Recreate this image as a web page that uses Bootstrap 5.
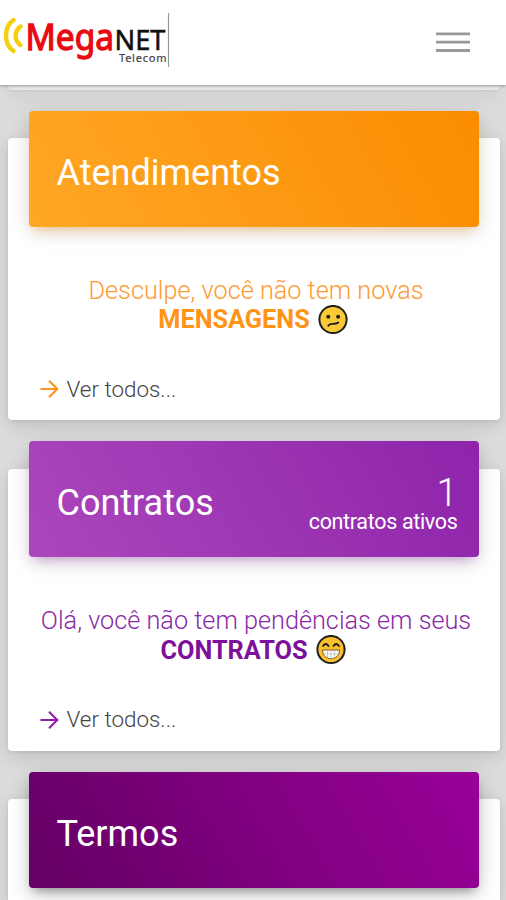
<!DOCTYPE html>
<html lang="pt-BR">
<head>
<meta charset="utf-8">
<meta name="viewport" content="width=device-width, initial-scale=1">
<title>MegaNET Telecom</title>
<link href="https://cdn.jsdelivr.net/npm/bootstrap@5.3.0/dist/css/bootstrap.min.css" rel="stylesheet">
<style>
  body { height: 900px; overflow: hidden; background: #dcdcdc; font-family: Roboto, sans-serif; }
  .topbar { height: 84.5px; padding: 0 36px 0 0; background: #fff; box-shadow: 0 1px 3px rgba(0,0,0,.32); z-index: 5; }
  .feed { height: 815.5px; padding: 0 6.5px 0 7.5px; }
  .panel { height: 282px; margin-bottom: 48.5px; border: 0; border-radius: 4px; background: #fff; box-shadow: 0 5px 18px rgba(0,0,0,.14), 0 1px 3px rgba(0,0,0,.08); }
  .panel-end { height: 5.5px; margin-bottom: 48px; border-radius: 0 0 4px 4px; background: #e8e8e8; }
  .plum.panel { height: 101px; margin-bottom: 0; border-radius: 4px 4px 0 0; }
  .banner { height: 116px; margin: -27.5px 21px 0; padding: 8px 21px 0 28px; border-radius: 4px; color: #fff; }
  .banner h2 { font-size: 36px; line-height: 42px; font-weight: 400; margin: 0; }
  .orange .banner { background: linear-gradient(60deg, #ffa726, #fb8c00); box-shadow: 0 5px 22px rgba(0,0,0,.13), 0 7px 12px -5px rgba(255,152,0,.4); }
  .purple .banner { background: linear-gradient(60deg, #ab47bc, #8e24aa); box-shadow: 0 5px 22px rgba(0,0,0,.13), 0 7px 12px -5px rgba(156,39,176,.4); }
  .plum .banner { background: linear-gradient(60deg, #640064, #990099); box-shadow: 0 5px 20px rgba(0,0,0,.22), 0 7px 10px -5px rgba(0,0,0,.35); }
  .tally { padding-top: 5px; }
  .tally b { font-size: 38px; line-height: 32px; font-weight: 300; }
  .tally span { font-size: 21.5px; line-height: 26px; letter-spacing: -.33px; }
  .notice { margin-top: 49px; font-size: 25.25px; line-height: 29px; font-weight: 300; white-space: nowrap; }
  .notice .lead-in { padding-left: 5px; }
  .notice strong { font-weight: 700; font-size: 25.3px; }
  .orange .notice { color: #ff9a30; }
  .orange .notice strong { color: #ff9416; }
  .purple .notice { color: #8a2aa6; }
  .purple .notice strong { color: #7c109a; }
  .orange .arrow { color: #ff9420; }
  .purple .arrow { color: #9520ac; }
  .more { margin-top: 41px; padding-left: 32px; font-size: 22.4px; line-height: 27px; font-weight: 300; color: #444; text-decoration: none; }
</style>
<script src="https://cdn.jsdelivr.net/npm/bootstrap@5.3.0/dist/js/bootstrap.bundle.min.js"></script>
</head>
<body>
<nav class="topbar position-relative d-flex align-items-center justify-content-between">
  <svg width="172" height="85" viewBox="0 0 172 85" role="img" aria-label="MegaNET Telecom">
    <g fill="none" stroke="#f6cf0c" stroke-width="4.400" stroke-linecap="round">
      <path d="M13.500 20C3.500 27 3.500 44 13.500 51"/>
      <path d="M20.500 26.500C14 31 14 40.500 20.500 45"/>
    </g>
    <g font-family="'Noto Sans', 'Open Sans', sans-serif">
      <text x="25.500" y="50" font-size="37" font-weight="400" fill="#e80c12" stroke="#e80c12" stroke-width="1.300" textLength="88.500" lengthAdjust="spacingAndGlyphs">Mega</text>
      <text x="114.500" y="50" font-size="27" font-weight="400" fill="#111" stroke="#111" stroke-width=".5" textLength="51" lengthAdjust="spacingAndGlyphs">NET</text>
      <text x="119" y="62" font-size="11" fill="#444" stroke="#444" stroke-width=".2" textLength="47.500">Telecom</text>
    </g>
    <path d="M168.500 13V67" stroke="#999" stroke-width="1.200"/>
  </svg>
  <svg width="34" height="22" viewBox="0 0 34 22" role="img" aria-label="Menu">
    <path d="M0 2.800H34M0 11.200H34M0 19.500H34" stroke="#999" stroke-width="2.800"/>
  </svg>
</nav>

<main class="feed">
  <div class="panel panel-end"></div>

  <section class="card panel orange">
    <div class="banner d-flex align-items-center"><h2>Atendimentos</h2></div>
    <div class="notice text-center">
      <div class="lead-in">Desculpe, você não tem novas</div>
      <div class="d-flex justify-content-center align-items-center">
        <strong>MENSAGENS</strong>
        <svg class="ms-2" width="31" height="30" viewBox="0 0 31 30" aria-hidden="true">
          <circle cx="15" cy="14.500" r="13.600" fill="#fcc936" stroke="#211f1f" stroke-width="2"/>
          <g fill="#211f1f"><circle cx="10.300" cy="11.800" r="2"/><circle cx="20.100" cy="11.800" r="2"/></g>
          <path d="M10.300 20.800C12.500 17 16.500 20.500 20.200 17.500" fill="none" stroke="#211f1f" stroke-width="1.900" stroke-linecap="round"/>
        </svg>
      </div>
    </div>
    <a class="more d-flex align-items-center" href="#">
      <svg class="arrow me-2" width="19" height="20" viewBox="0 0 19 20" fill="none" stroke="currentColor" stroke-width="2.200" aria-hidden="true"><path d="M.5 10H17M9 1.700L17.300 10L9 18.300"/></svg>
      Ver todos...
    </a>
  </section>

  <section class="card panel purple">
    <div class="banner d-flex align-items-center justify-content-between">
      <h2>Contratos</h2>
      <div class="tally d-flex flex-column align-items-end"><b>1</b><span>contratos ativos</span></div>
    </div>
    <div class="notice text-center">
      <div class="lead-in">Olá, você não tem pendências em seus</div>
      <div class="d-flex justify-content-center align-items-center">
        <strong>CONTRATOS</strong>
        <svg class="ms-2" width="31" height="30" viewBox="0 0 31 30" aria-hidden="true">
          <circle cx="15" cy="14.500" r="13.600" fill="#fbc02d" stroke="#211f1f" stroke-width="2"/>
          <path d="M7 11Q10 7 12.500 11M17.500 11Q20 7 23 11" fill="none" stroke="#211f1f" stroke-width="1.800" stroke-linecap="round"/>
          <path d="M6.500 15H23.500C23.500 26.500 6.500 26.500 6.500 15Z" fill="#fff" stroke="#7a5b20" stroke-width="1"/>
          <path d="M7.500 19H22.500M11.500 15.500V22.500M15 15.500V23.500M18.500 15.500V22.500" stroke="#bbb" stroke-width=".8"/>
        </svg>
      </div>
    </div>
    <a class="more d-flex align-items-center" href="#">
      <svg class="arrow me-2" width="19" height="20" viewBox="0 0 19 20" fill="none" stroke="currentColor" stroke-width="2.200" aria-hidden="true"><path d="M.5 10H17M9 1.700L17.300 10L9 18.300"/></svg>
      Ver todos...
    </a>
  </section>

  <section class="card panel plum">
    <div class="banner d-flex align-items-center"><h2>Termos</h2></div>
  </section>
</main>
</body>
</html>
